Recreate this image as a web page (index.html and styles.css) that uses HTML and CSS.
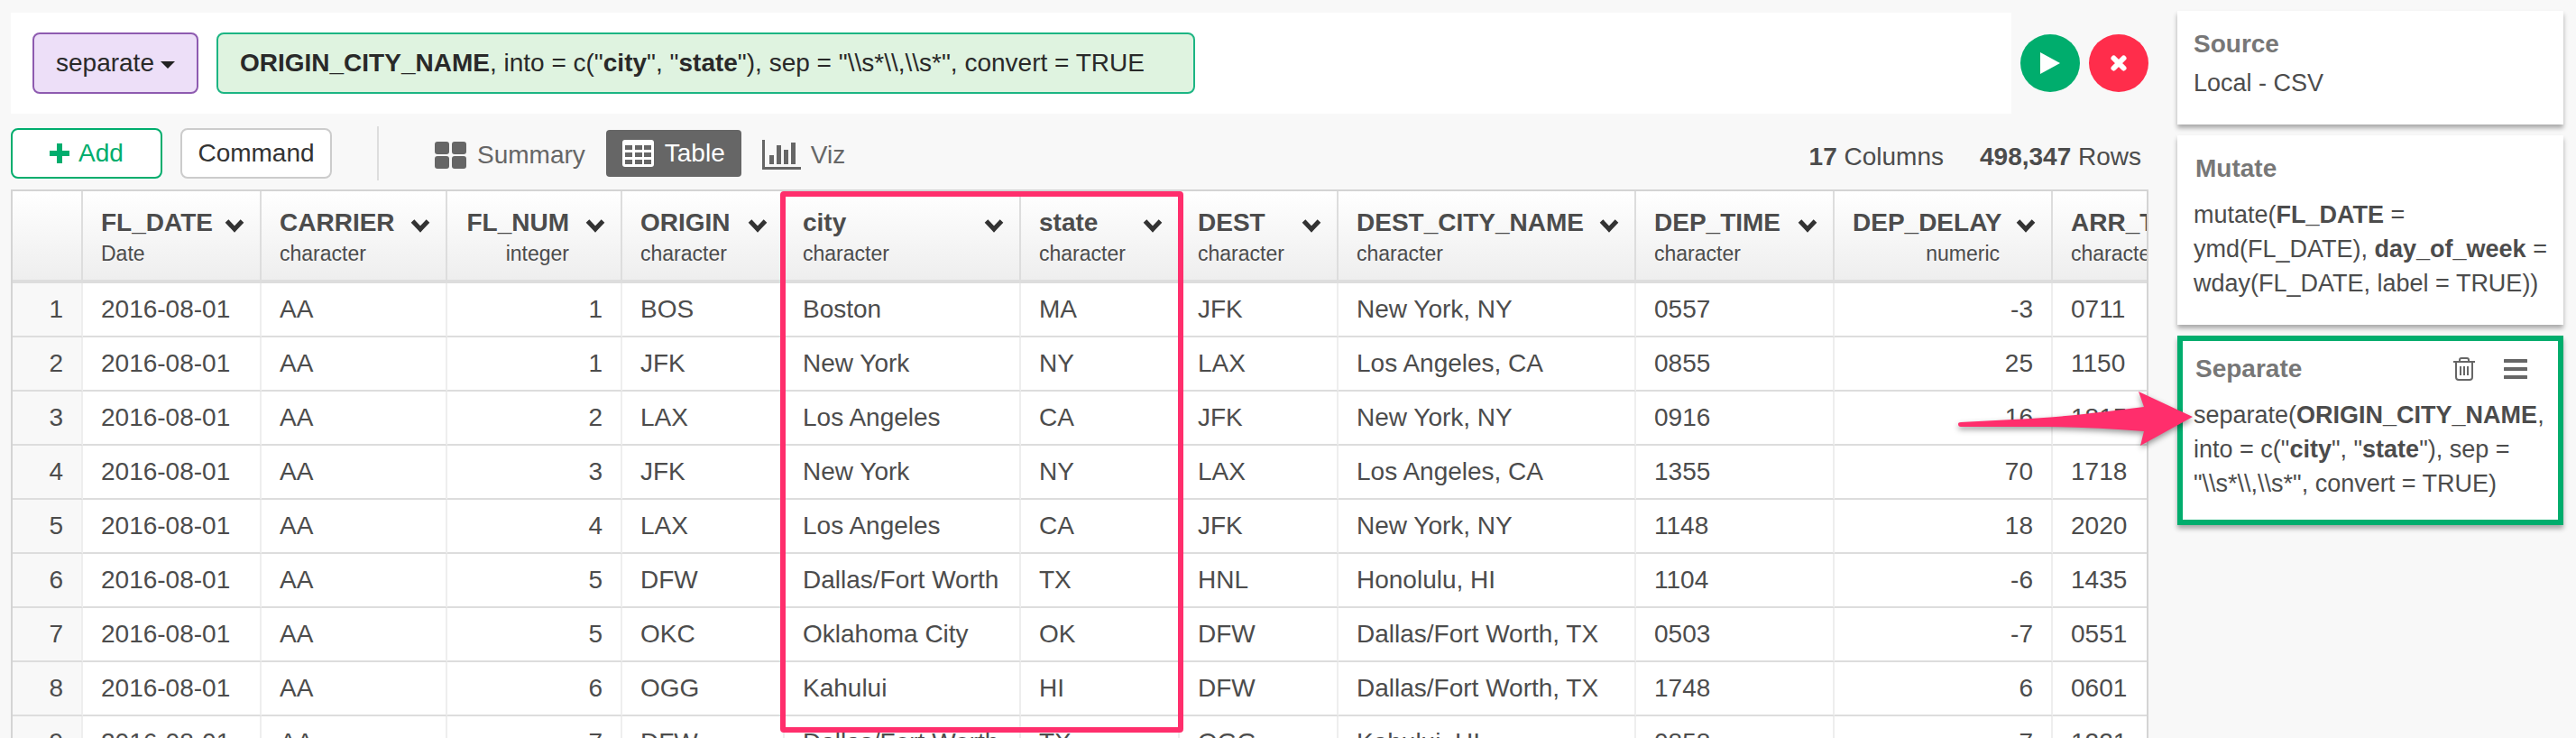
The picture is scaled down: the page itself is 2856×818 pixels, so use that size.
FILE: index.html
```html
<!DOCTYPE html>
<html lang="en">
<head>
<meta charset="utf-8">
<title>Flight data</title>
<link rel="stylesheet" href="styles.css">
</head>
<body>
<svg width="0" height="0" class="defs" aria-hidden="true">
  <symbol id="chevron" viewBox="0 0 22 16"><path d="M2.500 3 L11 12 L19.500 3" fill="none" stroke="#333" stroke-width="5"/></symbol>
</svg>
<div class="app">
  <main class="main">
    <div class="formula-row">
      <div class="formula-bar">
        <button class="verb" type="button">separate<svg class="caret" viewBox="0 0 16 12" width="16" height="12"><path d="M0 4H16L8 12Z" fill="#222"/></svg></button>
        <button class="args" type="button"><b>ORIGIN_CITY_NAME</b>, into = c("<b>city</b>", "<b>state</b>"), sep = "\\s*\\,\\s*", convert = TRUE</button>
      </div>
      <button class="round run" type="button" aria-label="Run"><svg viewBox="0 0 24 24" width="24" height="24"><path d="M1 0L23 12L1 24Z" fill="#fff"/></svg></button>
      <button class="round cancel" type="button" aria-label="Cancel"><svg viewBox="0 0 20 20" width="20" height="20"><path d="M4.500 4.500L15.500 15.500M15.500 4.500L4.500 15.500" stroke="#fff" stroke-width="6" stroke-linecap="round"/></svg></button>
    </div>
    <div class="toolbar">
      <button class="tool add" type="button"><svg viewBox="0 0 22 22" width="22" height="22"><path d="M11 0V22M0 11H22" stroke="#00ad6d" stroke-width="6"/></svg>Add</button>
      <button class="tool" type="button">Command</button>
      <span class="divider"></span>
      <nav class="views">
        <button class="view" type="button"><svg viewBox="0 0 36 30" width="36" height="30" fill="#666"><rect width="16" height="14" rx="3"/><rect x="19" width="16" height="14" rx="3"/><rect y="16" width="16" height="14" rx="3"/><rect x="19" y="16" width="16" height="14" rx="3"/></svg>Summary</button>
        <button class="view active" type="button"><svg viewBox="0 0 36 30" width="36" height="30"><rect width="35" height="30" rx="3" fill="#fff"/><path d="M3 6h8v5H3zM14 6h8v5h-8zM24 6h8v5h-8zM3 14h8v5H3zM14 14h8v5h-8zM24 14h8v5h-8zM3 22h8v5H3zM14 22h8v5h-8zM24 22h8v5h-8z" fill="#666"/></svg>Table</button>
        <button class="view" type="button"><svg viewBox="0 0 43 33" width="43" height="33" fill="#666"><path d="M0 0h3v30h40v3H0zM8 17h5v10H8zM16 6h5v21h-5zM24 11h5v16h-5zM32 3h5v24h-5z"/></svg>Viz</button>
      </nav>
      <p class="counts"><span><b>17</b> Columns</span><span><b>498,347</b> Rows</span></p>
    </div>
    <div class="grid-wrap">
      <table class="grid">
        <colgroup><col class="w78"><col class="w198"><col class="w206"><col class="w194"><col class="w180"><col class="w262"><col class="w176"><col class="w176"><col class="w330"><col class="w220"><col class="w242"><col class="w220"></colgroup>
        <thead id="head"></thead>
        <tbody id="rows"></tbody>
      </table>
      <div class="highlight"></div>
    </div>
  </main>
  <aside class="steps">
    <section class="card source"><header><h2>Source</h2></header><p>Local - CSV</p></section>
    <section class="card"><header><h2>Mutate</h2></header><p>mutate(<b>FL_DATE</b> = ymd(FL_DATE), <b>day_of_week</b> = wday(FL_DATE, label = TRUE))</p></section>
    <section class="card current"><header><h2>Separate</h2>
      <button class="icon" type="button" aria-label="Delete step"><svg viewBox="0 0 24 26" width="24" height="26" fill="none" stroke="#666" stroke-width="2"><path d="M0 5H24M7 5V3Q7 1 9 1H15Q17 1 17 3V5M3 6V22Q3 25 6 25H18Q21 25 21 22V6M8 10V20M12 10V20M16 10V20"/></svg></button>
      <button class="icon" type="button" aria-label="Step menu"><svg viewBox="0 0 26 22" width="26" height="22"><path d="M1 2H25M1 11H25M1 20H25" stroke="#666" stroke-width="4" stroke-linecap="round"/></svg></button></header>
      <p>separate(<b>ORIGIN_CITY_NAME</b>, into = c("<b>city</b>", "<b>state</b>"), sep = "\\s*\\,\\s*", convert = TRUE)</p>
      <svg class="arrow" viewBox="0 0 264 64" width="264" height="64"><path d="M3 34Q0 34 0 36Q0 39 3 39L100 39Q155 40 206 44L202 60L260 28L200 0L206 17Q130 27 80 30Z" fill="#ff2e6c"/></svg>
    </section>
  </aside>
</div>
<script src="grid.js"></script>
</body>
</html>
```
FILE: styles.css
```css
* { box-sizing: border-box; }
body { margin: 0; background: #f8f8f8; color: #4c4c4c; font-family: "Liberation Sans", Arial, sans-serif; font-size: 28px; line-height: 32px; height: 100vh; overflow: hidden; }
button { font: inherit; color: inherit; margin: 0; padding: 0; border: 0; background: none; display: flex; align-items: center; justify-content: center; white-space: nowrap; }
svg { display: block; flex: none; }
h2, p { margin: 0; }
.defs { position: absolute; }
.app { display: flex; gap: 32px; height: 100%; padding: 12px 14px 0 12px; }
.main { flex: 1; min-width: 0; display: flex; flex-direction: column; padding-top: 2px; }
.formula-row { display: flex; align-items: center; gap: 10px; }
.formula-bar { flex: 1; display: flex; gap: 20px; padding: 22px 24px; background: #fff; color: #292929; }
.verb, .args { height: 68px; border: 2px solid #8e5bb0; border-radius: 8px; background: #eddff8; padding: 0 24px; }
.verb { gap: 7px; }
.args { background: #dff3e0; border-color: #1cb583; padding: 0 54px 0 24px; display: block; }
.round { width: 66px; height: 64px; border-radius: 50%; }
.run { background: #00ad6d; }
.cancel { background: #ff2d4b; }
.toolbar { display: flex; align-items: center; padding: 14px 8px 10px 0; }
.tool { width: 168px; height: 56px; border: 2px solid #ccc; border-radius: 8px; background: #fff; color: #333; margin-right: 20px; }
.add { border-color: #00ad6d; color: #00ad6d; gap: 10px; }
.divider { width: 2px; height: 60px; background: #ddd; margin: 0 44px 0 30px; }
.views { display: flex; gap: 5px; }
.view { height: 52px; padding: 3px 18px 0; gap: 11px; border-radius: 4px; color: #666; }
.view.active { background: #666; color: #fff; padding-top: 0; }
.counts { margin-left: auto; display: flex; gap: 40px; padding-top: 8px; }
.grid-wrap { position: relative; flex: 1; min-height: 0; overflow: hidden; border: 2px solid #d4d4d4; border-bottom: 0; }
.grid { table-layout: fixed; width: 2482px; border-collapse: separate; border-spacing: 0; background: #fff; }
.w78 { width: 78px; } .w176 { width: 176px; } .w180 { width: 180px; } .w194 { width: 194px; } .w198 { width: 198px; } .w206 { width: 206px; } .w220 { width: 220px; } .w242 { width: 242px; } .w262 { width: 262px; } .w330 { width: 330px; }
th, td { padding: 0 20px; text-align: left; white-space: nowrap; border-right: 2px solid #eee; border-bottom: 2px solid #ddd; }
.grid thead th { height: 102px; padding: 8px 17px 0 20px; border-right-color: #ddd; border-bottom-width: 4px; background: linear-gradient(#fff, #eee); }
.grid td, .grid tbody th { height: 60px; }
.grid tbody th { background: #f8f8f8; font-weight: 400; text-align: right; }
.head { display: grid; grid-template-columns: minmax(0, 1fr) 22px; column-gap: 18px; align-items: center; }
.head svg { margin-top: 6px; }
.kind { font-size: 23px; font-weight: 400; line-height: 36px; }
.grid .num { text-align: right; }
.highlight { position: absolute; left: 851px; top: 0; width: 447px; height: 600px; border: 6px solid #ff2e6c; border-radius: 4px; }
.steps { width: 428px; flex: none; display: flex; flex-direction: column; gap: 12px; }
.card { position: relative; background: #fff; box-shadow: 0 4px 5px rgba(0, 0, 0, .32); padding: 19px 14px 27px 18px; font-size: 27px; line-height: 38px; }
.card header { display: flex; align-items: center; gap: 32px; height: 36px; padding: 0 26px 0 2px; margin-bottom: 14px; }
.card h2 { flex: 1; font-size: 28px; line-height: 36px; color: #777; }
.source header { margin-bottom: 6px; padding-left: 0; }
.current { border: 6px solid #00ad6d; padding: 13px 0 21px 12px; }
.current header { padding-right: 34px; }
.arrow { position: absolute; left: -249px; top: 56px; filter: drop-shadow(0 3px 3px rgba(0, 0, 0, .4)); }
```
FILE: grid.js
```js
const columns = [
  ["FL_DATE", "Date"], ["CARRIER", "character"], ["FL_NUM", "integer"], ["ORIGIN", "character"],
  ["city", "character"], ["state", "character"], ["DEST", "character"], ["DEST_CITY_NAME", "character"],
  ["DEP_TIME", "character"], ["DEP_DELAY", "numeric"], ["ARR_TIME", "character"]
];
const rows = [
  ["1", "BOS", "Boston", "MA", "JFK", "New York, NY", "0557", "-3", "0711"],
  ["1", "JFK", "New York", "NY", "LAX", "Los Angeles, CA", "0855", "25", "1150"],
  ["2", "LAX", "Los Angeles", "CA", "JFK", "New York, NY", "0916", "16", "1815"],
  ["3", "JFK", "New York", "NY", "LAX", "Los Angeles, CA", "1355", "70", "1718"],
  ["4", "LAX", "Los Angeles", "CA", "JFK", "New York, NY", "1148", "18", "2020"],
  ["5", "DFW", "Dallas/Fort Worth", "TX", "HNL", "Honolulu, HI", "1104", "-6", "1435"],
  ["5", "OKC", "Oklahoma City", "OK", "DFW", "Dallas/Fort Worth, TX", "0503", "-7", "0551"],
  ["6", "OGG", "Kahului", "HI", "DFW", "Dallas/Fort Worth, TX", "1748", "6", "0601"],
  ["7", "DFW", "Dallas/Fort Worth", "TX", "OGG", "Kahului, HI", "0858", "7", "1221"]
];
const isNumber = i => columns[i][1] === "integer" || columns[i][1] === "numeric";
const cls = i => isNumber(i) ? ' class="num"' : "";
document.getElementById("head").innerHTML = "<tr><th></th>" + columns.map(([name, kind], i) =>
  `<th${cls(i)} scope="col"><div class="head"><span>${name}</span><svg width="22" height="16"><use href="#chevron"/></svg><span class="kind">${kind}</span></div></th>`
).join("") + "</tr>";
document.getElementById("rows").innerHTML = rows.map((row, n) =>
  `<tr><th scope="row">${n + 1}</th>` + ["2016-08-01", "AA", ...row].map((v, i) => `<td${cls(i)}>${v}</td>`).join("") + "</tr>"
).join("");
```
